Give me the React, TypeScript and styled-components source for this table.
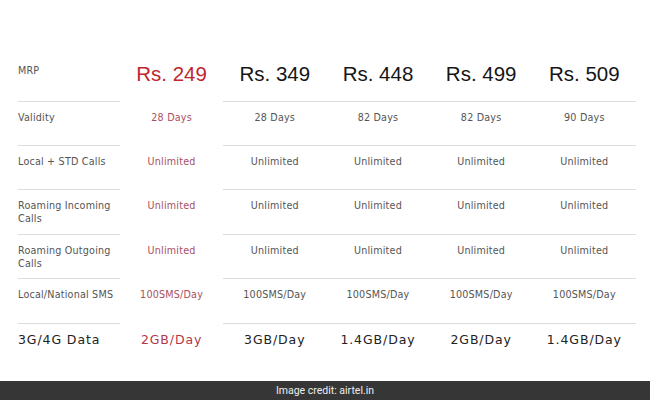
import { Fragment } from "react";
import styled, { createGlobalStyle } from "styled-components";

const GlobalStyle = createGlobalStyle`
  html, body {
    margin: 0;
    padding: 0;
    background: #fff;
  }
  #root {
    min-height: 100vh;
  }
`;

const Page = styled.div`
  display: flex;
  flex-direction: column;
  min-height: 100vh;
  font-family: "DejaVu Sans", "Liberation Sans", sans-serif;
`;

const Main = styled.main`
  flex: 1;
  padding: 55px 14px 0 18px;
`;

const Table = styled.div`
  display: grid;
  grid-template-columns: 102px repeat(5, 103.2px);
`;

const Cell = styled.div<{ $line?: boolean; $label?: boolean; $h: number }>`
  box-sizing: border-box;
  height: ${(p) => p.$h}px;
  padding-top: 9px;
  border-bottom: 1px solid ${(p) => (p.$line ? "#dcdcdc" : "transparent")};
  text-align: ${(p) => (p.$label ? "left" : "center")};
`;

const RowLabel = styled.span<{ $big?: boolean }>`
  display: block;
  font-size: ${(p) => (p.$big ? "12.5px" : "9.6px")};
  line-height: 13px;
  letter-spacing: ${(p) => (p.$big ? "0.9px" : "0.2px")};
  color: ${(p) => (p.$big ? "#222" : "#555")};
  padding-right: 6px;
`;

const Value = styled.span<{ $hot?: boolean; $big?: boolean }>`
  display: block;
  font-size: ${(p) => (p.$big ? "12.5px" : "9.6px")};
  line-height: 13px;
  letter-spacing: ${(p) => (p.$big ? "0.9px" : "0.2px")};
  color: ${(p) =>
    p.$hot ? (p.$big ? "#b1374a" : "#a9505f") : p.$big ? "#222" : "#555"};
`;

const Price = styled.span<{ $hot?: boolean }>`
  display: block;
  font-family: "Liberation Sans", Arial, sans-serif;
  font-size: 20.5px;
  line-height: 24px;
  margin-top: -2px;
  color: ${(p) => (p.$hot ? "#c0262e" : "#161616")};
`;

const Footer = styled.footer`
  height: 19px;
  background: #363636;
  color: #ececec;
  font-family: Roboto, "Liberation Sans", sans-serif;
  font-size: 10.5px;
  line-height: 19px;
  text-align: center;
`;

const prices = ["Rs. 249", "Rs. 349", "Rs. 448", "Rs. 499", "Rs. 509"];

const rows: { label: string; values: string[]; height: number; big?: boolean; last?: boolean }[] = [
  { label: "Validity", values: ["28 Days", "28 Days", "82 Days", "82 Days", "90 Days"], height: 44 },
  { label: "Local + STD Calls", values: ["Unlimited", "Unlimited", "Unlimited", "Unlimited", "Unlimited"], height: 44 },
  { label: "Roaming Incoming Calls", values: ["Unlimited", "Unlimited", "Unlimited", "Unlimited", "Unlimited"], height: 45 },
  { label: "Roaming Outgoing Calls", values: ["Unlimited", "Unlimited", "Unlimited", "Unlimited", "Unlimited"], height: 44 },
  { label: "Local/National SMS", values: ["100SMS/Day", "100SMS/Day", "100SMS/Day", "100SMS/Day", "100SMS/Day"], height: 45 },
  { label: "3G/4G Data", values: ["2GB/Day", "3GB/Day", "1.4GB/Day", "2GB/Day", "1.4GB/Day"], height: 44, big: true, last: true },
];

export default function App() {
  return (
    <Page>
      <GlobalStyle />
      <Main>
        <Table>
          <Cell $label $line $h={47}>
            <RowLabel>MRP</RowLabel>
          </Cell>
          {prices.map((p, i) => (
            <Cell key={p} $line={i > 0} $h={47}>
              <Price $hot={i === 0}>{p}</Price>
            </Cell>
          ))}
          {rows.map((r) => (
            <Fragment key={r.label}>
              <Cell $label $line={!r.last} $h={r.height}>
                <RowLabel $big={r.big}>{r.label}</RowLabel>
              </Cell>
              {r.values.map((v, i) => (
                <Cell key={i} $line={!r.last && i > 0} $h={r.height}>
                  <Value $hot={i === 0} $big={r.big}>
                    {v}
                  </Value>
                </Cell>
              ))}
            </Fragment>
          ))}
        </Table>
      </Main>
      <Footer>Image credit: airtel.in</Footer>
    </Page>
  );
}
